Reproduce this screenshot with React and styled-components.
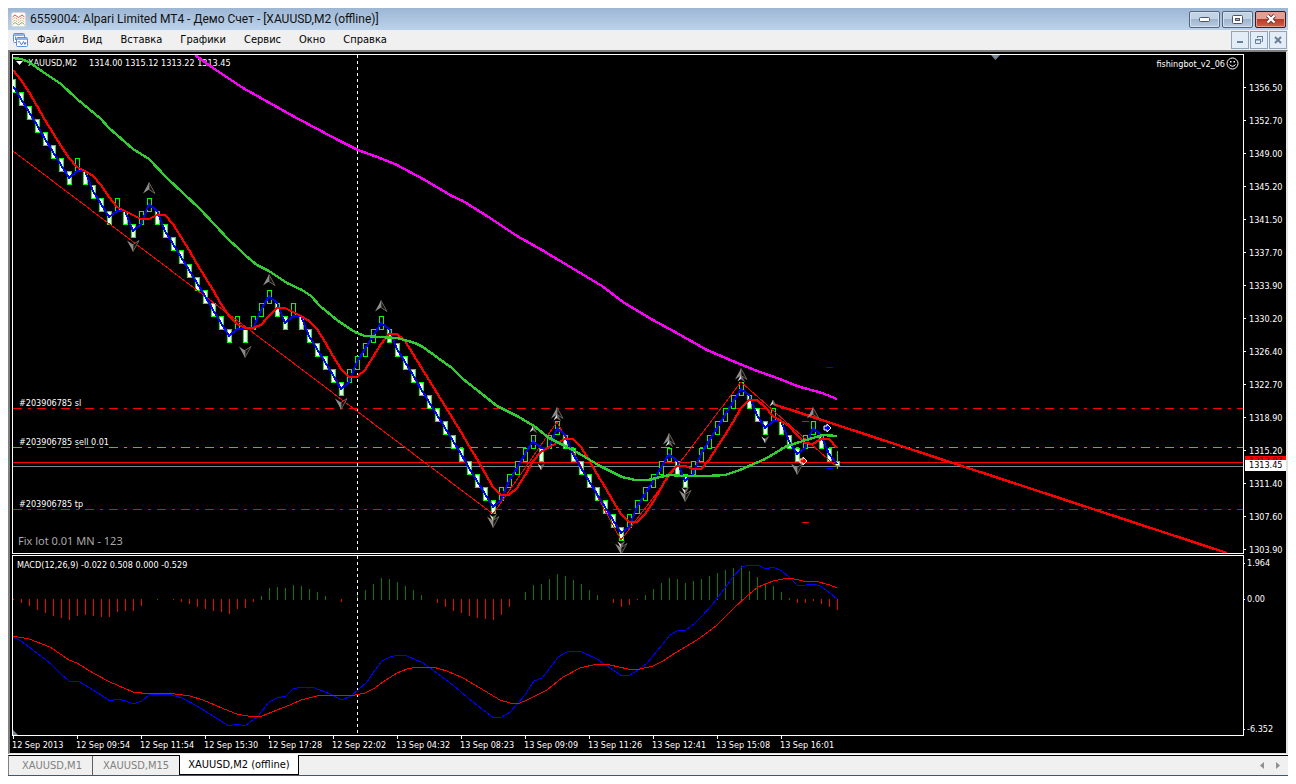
import React from 'react'
import styled, { createGlobalStyle } from 'styled-components'

const menu = ['Файл', 'Вид', 'Вставка', 'Графики', 'Сервис', 'Окно', 'Справка']

const prices = [
    '1356.50', '1352.70', '1349.00', '1345.20', '1341.50', '1337.70', '1333.90', '1330.20',
    '1326.40', '1322.70', '1318.90', '1315.20', '1311.40', '1307.60', '1303.90',
]

const times = [
    '12 Sep 2013', '12 Sep 09:54', '12 Sep 11:54', '12 Sep 15:30', '12 Sep 17:28', '12 Sep 22:02', '13 Sep 04:32',
    '13 Sep 08:23', '13 Sep 09:09', '13 Sep 11:26', '13 Sep 12:41', '13 Sep 15:08', '13 Sep 16:01',
]

const tabs = ['XAUUSD,M1', 'XAUUSD,M15', 'XAUUSD,M2 (offline)']

// renko runs: direction and number of bricks
const runs = 'D8 U1 D4 U1 D2 U2 D10 U1 D1 U3 D2 U1 D6 U5 D14 U5 D1 U2 D8 U6 D2 U7 D3 U1 D3 U2 D2'

const barX = i => 13 + i * 8
const levelY = k => Math.round(79.3 + k * 13.16)

const buildBricks = () => {
    const bricks = []
    let level = -1
    runs.split(' ').forEach(run => {
        const down = run[0] === 'D'
        for (let n = 0; n < Number(run.slice(1)); n++) {
            level += down ? 1 : -1
            bricks.push({ x: barX(bricks.length), level, down })
        }
    })
    return bricks
}

const bricks = buildBricks()

const closes = bricks.map(b => (b.down ? b.level + 1 : b.level))

const fastLine = closes
    .map((c, i) => {
        const prev = i ? closes[i - 1] : c - 1
        return `${barX(i)},${levelY((c + prev) / 2)}`
    })
    .concat('837,464')
    .join(' ')

const slowValues = [
    70, 80, 92, 106, 120, 133, 146, 158, 167, 171, 176, 185, 197, 207, 211, 215, 219, 219, 215, 215, 224, 237, 250, 264,
    277, 290, 304, 316, 324, 328, 328, 325, 316, 308, 308, 312, 316, 321, 329, 342, 356, 369, 377, 377, 370, 357, 344,
    334, 334, 341, 354, 367, 380, 393, 406, 419, 432, 446, 459, 473, 487, 495, 495, 488, 475, 461, 452, 447, 443, 439,
    439, 447, 460, 474, 487, 501, 514, 522, 522, 514, 502, 488, 474, 466, 466, 469, 469, 460, 447, 435, 422, 408, 400,
    400, 407, 416, 421, 426, 435, 443, 444, 439, 439, 448,
]

const slowLine = slowValues.map((y, i) => `${barX(i)},${y}`).join(' ')

const greenLine =
    '13,58 21,59 29,62 43,72 61,84 77,99 101,119 109,128 133,149 149,159 167,178 200,209 229,240 238,248 246,256 257,265 269,271 287,283 302,290 311,296 320,306 337,320 350,329 357,333 365,336 380,337 397,338 415,343 423,347 438,358 452,368 463,379 477,390 497,406 517,416 534,426 549,438 563,445 580,454 600,466 622,477 635,480 648,480 660,477 670,475 683,476 707,476 725,475 740,470 765,459 787,446 803,441 823,435 837,436'

const magentaLine =
    '195,55 213,68 243,88 268,102 293,116 323,132 340,141 358,150 380,158 397,165 423,179 452,196 463,201 490,218 517,236 542,250 567,265 602,286 623,302 653,320 675,332 707,350 742,365 760,372 780,379 797,386 822,393 837,399'

const zigzag = '13,151 493,514 557,422 621,540 741,382 837,467'

const histogram = [
    -1, -4, -7, -11, -14, -17, -19, -21, -17, -16, -17, -18, -18, -13, -12, -12, -7, 0, 1, 0, -1, -3, -5, -8, -10, -12,
    -13, -15, -10, -9, -3, 4, 12, 13, 12, 15, 14, 11, 8, 4, 0, -3, 0, 5, 10, 16, 22, 21, 18, 14, 10, 5, 0, -4, -8, -12,
    -14, -17, -19, -20, -21, -16, -8, 0, 8, 15, 16, 21, 26, 24, 20, 16, 10, 5, 0, -4, -8, -6, -1, 5, 11, 17, 22, 21, 17,
    19, 21, 24, 27, 30, 32, 34, 29, 23, 16, 14, 8, 2, -4, -4, -2, -5, -8, -11,
]

const macdLine =
    '13,637 21,641 29,647 45,659 53,666 61,674 69,681 78,681 85,685 101,695 110,701 117,699 126,701 133,704 142,701 149,695 157,694 168,694 182,698 197,706 213,716 229,726 237,724 245,726 258,716 269,702 277,698 286,696 293,689 301,687 312,687 320,690 330,694 342,700 351,696 358,690 367,682 373,673 382,661 390,657 398,655 407,656 423,663 437,673 453,685 468,698 487,713 494,718 502,717 510,712 525,695 534,681 542,678 550,668 558,657 567,652 574,651 582,652 597,659 613,670 622,676 630,675 638,670 647,663 662,645 670,635 677,631 686,630 694,624 702,616 712,605 722,592 733,577 742,567 748,565 758,565 766,569 773,567 782,571 790,578 797,585 806,585 815,584 822,587 830,593 837,599'

const signalLine =
    '13,636 29,639 50,647 69,660 77,663 93,673 110,682 133,692 150,694 155,693 168,693 190,696 203,700 229,711 237,714 253,717 262,716 277,710 290,705 301,700 317,696 330,695 350,696 365,693 375,688 383,682 397,673 407,669 418,667 433,667 447,671 463,678 480,688 500,700 510,703 520,703 527,700 547,690 563,677 580,668 597,664 610,665 628,669 640,669 653,666 663,661 672,655 682,649 700,638 717,625 733,609 747,596 758,587 773,581 783,579 790,578 803,581 815,581 830,585 837,588'

const fractals = [
    { x: 149, y: 188 }, { x: 269, y: 280 }, { x: 381, y: 306 }, { x: 557, y: 413 }, { x: 669, y: 439 },
    { x: 741, y: 374 }, { x: 813, y: 413 },
    { x: 133, y: 245, down: true }, { x: 245, y: 351, down: true }, { x: 341, y: 403, down: true },
    { x: 493, y: 521, down: true }, { x: 621, y: 548, down: true }, { x: 685, y: 495, down: true },
    { x: 797, y: 468, down: true },
]

const smallFractals = [
    { x: 533, y: 429 }, { x: 557, y: 417 }, { x: 669, y: 443 }, { x: 741, y: 378 }, { x: 773, y: 403 },
    { x: 493, y: 517, down: true }, { x: 541, y: 466, down: true }, { x: 621, y: 544, down: true },
    { x: 685, y: 490, down: true }, { x: 765, y: 439, down: true },
]

const Fractal = ({ x, y, down, small }) => (
    <g transform={`translate(${x} ${y + 0.5}) scale(${small ? 0.6 : 1} ${(down ? -1 : 1) * (small ? 0.6 : 1)})`}>
        <path d="M0 -6 L6 5 L0 1 Z" fill={small ? '#777' : '#111'} stroke="#6b6357" strokeWidth="1" />
        <path d="M0 -6 L-6 5 L0 1 Z" fill={small ? '#d8d8d8' : '#8c8c8c'} />
    </g>
)

const DealArrow = ({ x, y, color }) => (
    <path
        transform={`translate(${x} ${y})`}
        d="M-3 -2 H0 V-4 L4 0 L0 4 V2 H-3 Z"
        fill={color}
        stroke="#fff"
        strokeWidth="1"
    />
)

const PriceChart = () => (
    <Plot height="498" role="img" aria-label="XAUUSD M2">
        <g transform="translate(-13 -55)">
            <path d="M16 61 H23 L19.5 65 Z" fill="#fff" />
            <ChartText x="28" y="66">XAUUSD,M2</ChartText>
            <ChartText x="89" y="66">1314.00 1315.12 1313.22 1313.45</ChartText>
            <ChartText x="19" y="406">#203906785 sl</ChartText>
            <ChartText x="19" y="445">#203906785 sell 0.01</ChartText>
            <ChartText x="19" y="507">#203906785 tp</ChartText>
            <NoteText x="18" y="545">Fix lot 0.01 MN - 123</NoteText>
            <path d="M991 55 H1000 L995.5 60 Z" fill="#778899" />

            <g shapeRendering="crispEdges" fill="none">
                <line x1="357.5" x2="357.5" y1="55" y2="553" stroke="#fff" strokeDasharray="3 3" />
                <OrderLine x1="13" x2="200%" y1="408.5" y2="408.5" stroke="#f00" />
                <OrderLine x1="13" x2="200%" y1="447.5" y2="447.5" stroke="#32cd32" />
                <OrderLine x1="13" x2="200%" y1="509.5" y2="509.5" stroke="#f00" />
                <line x1="13" x2="200%" y1="462.5" y2="462.5" stroke="#f00" />
                <line x1="13" x2="200%" y1="466.5" y2="466.5" stroke="#778899" />

                {bricks.map(b => (
                    <rect
                        key={b.x}
                        x={b.x - 1.5}
                        y={levelY(b.level) + 0.5}
                        width="4"
                        height="13"
                        stroke="#0f0"
                        fill={b.down ? '#fff' : '#000'}
                    />
                ))}
                <line x1="837.5" x2="837.5" y1="451" y2="469" stroke="#0f0" />
                <rect x="835.5" y="461.5" width="4" height="4" stroke="#0f0" fill="#fff" />

                <polyline points={zigzag} stroke="#f00" />
                <polyline points={magentaLine} stroke="#f0f" strokeWidth="2.4" />
                <polyline points={fastLine} stroke="#00f" strokeWidth="2" />
                <polyline points={slowLine} stroke="#f00" strokeWidth="2.2" />
                <polyline points={greenLine} stroke="#32cd32" strokeWidth="2.4" />
                <line x1="773" y1="404" x2="1227" y2="553" stroke="#f00" strokeWidth="2.4" />

                <path d="M826 367.5 h7 M826 468.5 h7" stroke="#00f" />
                <path d="M802 421.5 h7 M802 522.5 h7" stroke="#f00" />
            </g>

            {fractals.map(f => (
                <Fractal key={f.x} {...f} />
            ))}
            {smallFractals.map(f => (
                <Fractal key={f.x} small {...f} />
            ))}
            <DealArrow x={827} y={428} color="#00f" />
            <DealArrow x={803} y={461} color="#f00" />
        </g>
    </Plot>
)

const MacdChart = () => (
    <Plot height="179" role="img" aria-label="MACD">
        <g transform="translate(-13 -556)">
            <g shapeRendering="crispEdges" fill="none">
                {histogram.map((v, i) =>
                    v ? (
                        <rect
                            key={i}
                            x={barX(i)}
                            y={v > 0 ? 600 - v : 599}
                            width="1"
                            height={Math.abs(v)}
                            fill={v > 0 ? '#008000' : '#f00'}
                        />
                    ) : null
                )}
                <line x1="357.5" x2="357.5" y1="556" y2="735" stroke="#fff" strokeDasharray="3 3" />
                <polyline points={macdLine} stroke="#00f" />
                <polyline points={signalLine} stroke="#f00" />
            </g>
            <path d="M13 730 L18 735 H13 Z" fill="#778899" />
            <ChartText x="17" y="568">MACD(12,26,9) -0.022 0.508 0.000 -0.529</ChartText>
        </g>
    </Plot>
)

const AppIcon = () => (
    <svg width="15" height="15" viewBox="0 0 15 15" aria-hidden="true">
        <rect x="0.5" y="0.5" width="14" height="14" rx="2" fill="#fff" stroke="#e0d8d0" />
        <path d="M1.5 5 L4 3 L7.5 5.5 L11 3 L13.5 5" fill="none" stroke="#d9534a" />
        <path d="M1.5 7.5 L4 5.5 L7.5 8 L11 5.5 L13.5 7.5" fill="none" stroke="#e58a4a" strokeDasharray="1.5 0.7" />
        <path d="M1.5 10 L4 8 L7.5 10.5 L11 8 L13.5 10" fill="none" stroke="#c8a860" strokeDasharray="1.5 0.7" />
        <path d="M1.5 12.5 L4 10.5 L7.5 13 L11 10.5 L13.5 12.5" fill="none" stroke="#7fae6a" />
    </svg>
)

const ChartsIcon = () => (
    <svg width="15" height="14" viewBox="0 0 15 14" aria-hidden="true">
        <rect x="0.5" y="0.5" width="11" height="9" rx="1" fill="#fff" stroke="#5b8fd6" />
        <path d="M1 2 H11" stroke="#8db4e8" strokeWidth="2" />
        <path d="M2.5 3.5 V7 M4.5 4 V6" stroke="#5b8fd6" />
        <rect x="3.5" y="4.5" width="11" height="9" rx="1" fill="#fff" stroke="#5b8fd6" />
        <path d="M4 6 H14" stroke="#8db4e8" strokeWidth="2" />
        <path d="M5 9 L6.5 8.5 L8.5 12 L10.5 8.5 L12 11.5 L13 9" fill="none" stroke="#4a80cc" />
    </svg>
)

const Smiley = () => (
    <svg width="13" height="13" viewBox="0 0 13 13" fill="none" stroke="#fff" aria-hidden="true">
        <circle cx="6.5" cy="6.5" r="5.5" />
        <path d="M4 4 h1.5 v1.5 h-1.5 Z M7.5 4 h1.5 v1.5 h-1.5 Z" fill="#fff" stroke="none" />
        <path d="M3.5 7.5 Q6.5 11 9.5 7.5" />
    </svg>
)

const App = () => (
    <>
        <GlobalStyle />
        <Terminal>
            <TitleBar>
                <AppIcon />
                <Title>6559004: Alpari Limited MT4 - Демо Счет - [XAUUSD,M2 (offline)]</Title>
                <WindowButton aria-label="Minimize">
                    <svg width="11" height="5" viewBox="0 0 11 5">
                        <rect x="0.5" y="0.5" width="10" height="4" rx="1" fill="#fff" stroke="#4c5464" />
                    </svg>
                </WindowButton>
                <WindowButton aria-label="Maximize">
                    <svg width="11" height="9" viewBox="0 0 11 9">
                        <rect x="0.5" y="0.5" width="10" height="8" rx="1" fill="#fff" stroke="#4c5464" />
                        <rect x="3.5" y="3.5" width="4" height="2" fill="#9db2cf" stroke="#4c5464" />
                    </svg>
                </WindowButton>
                <WindowButton $close aria-label="Close">
                    <svg width="12" height="10" viewBox="0 0 12 10">
                        <path d="M2.5 1.5 L9.5 8.5 M9.5 1.5 L2.5 8.5" stroke="#5a2a2a" strokeWidth="4" />
                        <path d="M2.5 1.5 L9.5 8.5 M9.5 1.5 L2.5 8.5" stroke="#fff" strokeWidth="2.4" />
                    </svg>
                </WindowButton>
            </TitleBar>

            <MenuBar>
                <ChartsIcon />
                <MenuItems>
                    {menu.map(item => (
                        <MenuItem key={item}>{item}</MenuItem>
                    ))}
                </MenuItems>
                <ChildButton aria-label="Minimize chart">
                    <svg width="10" height="10" viewBox="0 0 10 10">
                        <path d="M2 7 H8" stroke="#6b7f94" strokeWidth="2" />
                    </svg>
                </ChildButton>
                <ChildButton aria-label="Restore chart">
                    <svg width="10" height="10" viewBox="0 0 10 10" fill="none" stroke="#6b7f94">
                        <path d="M3.5 3 V1.5 H8.5 V6.5 H7.5 M3 1.5 H9" />
                        <path d="M1.5 4.5 H6.5 V8.5 H1.5 Z M1 5 H7" />
                    </svg>
                </ChildButton>
                <ChildButton aria-label="Close chart">
                    <svg width="10" height="10" viewBox="0 0 10 10">
                        <path d="M2 2 L8 8 M8 2 L2 8" stroke="#6b7f94" strokeWidth="2" />
                    </svg>
                </ChildButton>
            </MenuBar>

            <ChartWindow>
                <Panel>
                    <PriceChart />
                    <Expert>
                        fishingbot_v2_06
                        <Smiley />
                    </Expert>
                </Panel>
                <PriceAxis>
                    {prices.map(p => (
                        <PriceMark key={p}>{p}</PriceMark>
                    ))}
                    <AskPrice>1313.87</AskPrice>
                    <BidPrice>1313.45</BidPrice>
                </PriceAxis>

                <Panel>
                    <MacdChart />
                </Panel>
                <MacdAxis>
                    <MacdMark>1.964</MacdMark>
                    <MacdMark>0.00</MacdMark>
                    <MacdMark>-6.352</MacdMark>
                </MacdAxis>

                <TimeAxis>
                    {times.map(t => (
                        <TimeMark key={t}>{t}</TimeMark>
                    ))}
                </TimeAxis>
            </ChartWindow>

            <TabBar>
                {tabs.map((t, i) => (
                    <Tab key={t} $active={i === 2}>
                        {t}
                    </Tab>
                ))}
                <Scroller>
                    <ScrollButton aria-label="Previous tabs">
                        <svg width="4" height="7" viewBox="0 0 4 7">
                            <path d="M4 0 V7 L0 3.5 Z" fill="#909090" />
                        </svg>
                    </ScrollButton>
                    <ScrollButton aria-label="Next tabs">
                        <svg width="4" height="7" viewBox="0 0 4 7">
                            <path d="M0 0 V7 L4 3.5 Z" fill="#909090" />
                        </svg>
                    </ScrollButton>
                </Scroller>
            </TabBar>
        </Terminal>
    </>
)

export default App

const GlobalStyle = createGlobalStyle`
    * {
        box-sizing: border-box;
    }

    body {
        margin: 8px;
        background: #fff;
        font-family: 'DejaVu Sans Condensed', 'DejaVu Sans', sans-serif;
        font-size: 9px;
    }

    button {
        font-family: inherit;
        padding: 0;
        margin: 0;
        border: 0;
        background: none;
    }

    svg {
        display: block;
        flex: none;
    }
`

const Terminal = styled.main`
    display: flex;
    flex-direction: column;
    border-bottom: 1px solid #46566a;
`

const TitleBar = styled.header`
    display: flex;
    align-items: center;
    gap: 2px;
    height: 22px;
    padding: 0 2px 0 3px;
    background: linear-gradient(#9cb6d4, #bcd2ea);
`

const Title = styled.h1`
    flex: 1;
    margin: 0 0 0 2px;
    font: 12px Roboto, 'Open Sans', sans-serif;
    white-space: nowrap;
    color: #111;
`

const WindowButton = styled.button`
    display: flex;
    align-items: center;
    justify-content: center;
    width: 31px;
    height: 17px;
    border: 1px solid ${props => (props.$close ? '#431422' : '#56647a')};
    border-radius: 2px;
    box-shadow: inset 0 0 0 1px ${props => (props.$close ? '#e0a090' : '#d3e0f0')};
    background: ${props =>
        props.$close
            ? 'linear-gradient(#e0a193 0 45%, #b83a26 50%, #d0604c)'
            : 'linear-gradient(#c3d3e6 0 45%, #9fb4ce 50%, #b9cce2)'};
`

const MenuBar = styled.nav`
    display: flex;
    align-items: center;
    gap: 1px;
    height: 20px;
    padding: 0 1px 0 5px;
    background: #f0f0f0;
`

const MenuItems = styled.div`
    display: flex;
    flex: 1;
    gap: 18px;
    padding-left: 8px;
`

const MenuItem = styled.button`
    font-size: 11px;
    line-height: 16px;
    color: #000;
`

const ChildButton = styled.button`
    display: flex;
    align-items: center;
    justify-content: center;
    width: 18px;
    height: 18px;
    border: 1px solid #8fa5bd;
    background: #e3edf8;
`

const ChartWindow = styled.section`
    display: grid;
    grid-template-columns: minmax(0, 1fr) 42px;
    padding: 2px 0 0 2px;
    border: solid;
    border-width: 2px 2px 1px 2px;
    border-color: #808080 #e3e3e3 #e3e3e3 #808080;
    background: #000;
    color: #fff;
`

const Panel = styled.div`
    position: relative;
    overflow: hidden;
    border: 1px solid #fff;
    margin-bottom: 1px;

    & ~ & {
        margin-bottom: 0;
    }
`

const Plot = styled.svg`
    width: 100%;
`

const ChartText = styled.text`
    fill: #fff;
    font-size: 9px;
`

const NoteText = styled.text`
    fill: #a9a9a9;
    font-family: 'Noto Sans', sans-serif;
    font-size: 11px;
`

const OrderLine = styled.line`
    stroke-dasharray: 9 6 3 6;
`

const Expert = styled.div`
    position: absolute;
    top: 2px;
    right: 4px;
    display: flex;
    align-items: center;
    gap: 1px;
`

const PriceAxis = styled.ul`
    position: relative;
    margin: 0 0 -11px;
    padding: 17px 0 0;
    list-style: none;
`

const PriceMark = styled.li`
    display: flex;
    align-items: center;
    gap: 3px;
    height: 33px;

    &::before {
        content: '';
        width: 2px;
        height: 1px;
        background: #fff;
    }
`

const PriceTag = styled.li`
    position: absolute;
    left: 1px;
    right: 0;
    padding-left: 4px;
    line-height: 11px;
    color: #000;
`

// only the top edge of the ask tag shows above the bid
const AskPrice = styled(PriceTag)`
    top: 402px;
    height: 4px;
    overflow: hidden;
    background: #f00;
`

const BidPrice = styled(PriceTag)`
    top: 406px;
    height: 11px;
    background: #fff;
`

const MacdAxis = styled.ul`
    display: flex;
    flex-direction: column;
    gap: 22px;
    margin: 0;
    padding: 1px 0 0;
    list-style: none;
`

const MacdMark = styled.li`
    display: flex;
    align-items: center;
    gap: 2px;
    height: 14px;

    &::before {
        content: '';
        width: 1px;
        height: 1px;
        background: #fff;
    }

    &:last-child {
        margin-top: auto;
    }
`

const TimeAxis = styled.div`
    grid-column: 1 / -1;
    display: flex;
    height: 17px;
    overflow: hidden;
`

const TimeMark = styled.span`
    flex: none;
    width: 64px;
    line-height: 12px;
    white-space: nowrap;

    &::before {
        content: '';
        display: block;
        width: 1px;
        height: 3px;
        margin-left: 1px;
        background: #fff;
    }
`

const TabBar = styled.footer`
    display: flex;
    align-items: stretch;
    height: 20px;
    margin-top: 1px;
    padding-left: 3px;
    border-top: 1px solid #000;
    border-left: 1px solid #808080;
    background: #f0f0f0;
`

const Tab = styled.button`
    padding: 0 ${props => (props.$active ? 8 : 10)}px;
    font-size: 11px;
    white-space: nowrap;
    color: ${props => (props.$active ? '#000' : '#808080')};
    background: ${props => (props.$active ? '#fff' : 'none')};
    border: ${props => (props.$active ? '1px solid #000' : '0')};
    margin-top: ${props => (props.$active ? -1 : 0)}px;
    border-top: 0;

    &:first-child {
        border-right: 1px solid #606060;
    }
`

const Scroller = styled.div`
    display: flex;
    align-items: center;
    gap: 4px;
    margin-left: auto;
    padding-right: 4px;
`

const ScrollButton = styled.button`
    display: flex;
    align-items: center;
    justify-content: center;
    width: 12px;
    height: 16px;
`
